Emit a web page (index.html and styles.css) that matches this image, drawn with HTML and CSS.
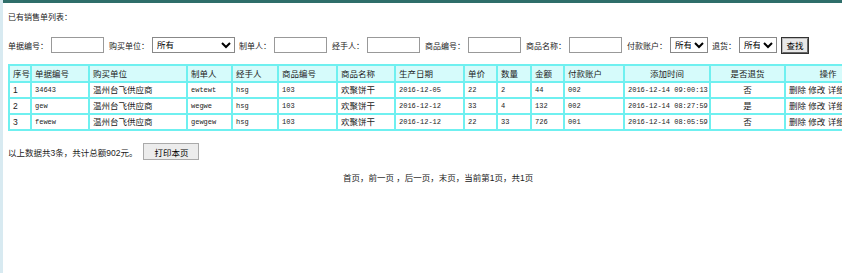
FILE: index.html
```html
<!DOCTYPE html>
<html lang="zh-CN">
<head>
  <meta charset="UTF-8">
  <title>已有销售单列表</title>
  <link rel="stylesheet" href="styles.css">
</head>
<body>
<div class="topbar"></div>
<div class="page">
  <div class="title">已有销售单列表：</div>

  <form class="filters">
    <label>单据编号：</label><input type="text" class="ipt">
    <label>购买单位：</label><select class="sel sel-wide"><option>所有</option></select>
    <label>制单人：</label><input type="text" class="ipt">
    <label>经手人：</label><input type="text" class="ipt">
    <label>商品编号：</label><input type="text" class="ipt">
    <label>商品名称：</label><input type="text" class="ipt">
    <label>付款账户：</label><select class="sel"><option>所有</option></select>
    <label>退货：</label><select class="sel"><option>所有</option></select>
    <button type="button" class="btn-find">查找</button>
  </form>

  <table class="list">
    <colgroup>
      <col style="width:22px"><col style="width:58px"><col style="width:98px"><col style="width:45px">
      <col style="width:46px"><col style="width:59px"><col style="width:58px"><col style="width:69px">
      <col style="width:33px"><col style="width:34px"><col style="width:33px"><col style="width:60px">
      <col style="width:86px"><col style="width:75px"><col style="width:86px">
    </colgroup>
    <tr class="head">
      <th>序号</th><th>单据编号</th><th>购买单位</th><th>制单人</th><th>经手人</th><th>商品编号</th>
      <th>商品名称</th><th>生产日期</th><th>单价</th><th>数量</th><th>金额</th><th>付款账户</th>
      <th class="c">添加时间</th><th class="c">是否退货</th><th class="c">操作</th>
    </tr>
    <tr>
      <td>1</td><td class="m">34643</td><td>温州台飞供应商</td><td class="m">ewtewt</td><td class="m">hsg</td><td class="m">103</td>
      <td>欢聚饼干</td><td class="m">2016-12-05</td><td class="m">22</td><td class="m">2</td><td class="m">44</td><td class="m">002</td>
      <td class="m c">2016-12-14 09:00:13</td><td class="c">否</td><td class="ops">删除 修改 详细</td>
    </tr>
    <tr>
      <td>2</td><td class="m">gew</td><td>温州台飞供应商</td><td class="m">wegwe</td><td class="m">hsg</td><td class="m">103</td>
      <td>欢聚饼干</td><td class="m">2016-12-12</td><td class="m">33</td><td class="m">4</td><td class="m">132</td><td class="m">002</td>
      <td class="m c">2016-12-14 08:27:59</td><td class="c">是</td><td class="ops">删除 修改 详细</td>
    </tr>
    <tr>
      <td>3</td><td class="m">fewew</td><td>温州台飞供应商</td><td class="m">gewgew</td><td class="m">hsg</td><td class="m">103</td>
      <td>欢聚饼干</td><td class="m">2016-12-12</td><td class="m">22</td><td class="m">33</td><td class="m">726</td><td class="m">001</td>
      <td class="m c">2016-12-14 08:05:59</td><td class="c">否</td><td class="ops">删除 修改 详细</td>
    </tr>
  </table>

  <div class="summary">
    <span>以上数据共3条，共计总额902元。</span>
    <button type="button" class="btn-print">打印本页</button>
  </div>

  <div class="pager">首页，前一页 ，后一页，末页，当前第1页，共1页</div>
</div>
</body>
</html>
```

FILE: styles.css
```css
:root {
  --teal: #2f6e6a;
  --cyan-border: #6ff0f0;
  --head-bg: #d6fbfb;
  --text: #222;
  --font: 'Liberation Sans', 'Noto Sans CJK SC', sans-serif;
}

html, body {
  margin: 0;
  padding: 0;
  overflow: hidden;
}

body {
  font-family: var(--font);
  font-size: 8.5px;
  color: var(--text);
  background: #fff;
  border-left: 3px solid #d8eaf1;
  height: 273px;
  box-sizing: border-box;
}

.topbar {
  height: 3px;
  background-color: var(--teal);
}

.page {
  padding: 0 0 0 5px;
}

.title {
  margin-top: 9px;
  height: 12px;
  line-height: 12px;
  font-size: 8px;
}

.filters {
  display: flex;
  align-items: center;
  margin-top: 12px;
  height: 18px;
  white-space: nowrap;
}

.filters label {
  flex-shrink: 0;
  font-size: 8px;
  margin-right: 3px;
}

.ipt {
  flex-shrink: 0;
  width: 53px;
  height: 16px;
  padding: 0;
  border: 1px solid #999;
  box-sizing: border-box;
  margin-right: 5px;
}

.sel {
  flex-shrink: 0;
  width: 38px;
  min-width: 38px;
  height: 16px;
  font-family: var(--font);
  font-size: 8.5px;
  padding: 0;
  border: 1px solid #888;
  background: #fff;
  margin-right: 4px;
  box-sizing: border-box;
}

.sel-wide {
  width: 83px;
  min-width: 83px;
}

.btn-find {
  flex-shrink: 0;
  height: 17px;
  width: 28px;
  padding: 0;
  font-family: var(--font);
  font-size: 8.5px;
  background: #e8e8e8;
  border: 2px outset #bbb;
  outline: 1px solid #333;
  outline-offset: -1px;
}

.list {
  margin-top: 10px;
  table-layout: fixed;
  width: 862px;
  border-collapse: collapse;
  border: 2px solid var(--cyan-border);
}

.list th,
.list td {
  border: 2px solid var(--cyan-border);
  padding: 0 3px;
  height: 14px;
  line-height: 14px;
  text-align: left;
  white-space: nowrap;
  overflow: hidden;
}

.list .head th {
  background-color: var(--head-bg);
  font-weight: normal;
  height: 15px;
}

.list .c {
  text-align: center;
}

.list .m {
  font-family: 'Liberation Mono', monospace;
  font-size: 7px;
}

.list .ops {
  padding-left: 3px;
}

.summary {
  display: flex;
  align-items: center;
  margin-top: 12px;
  height: 17px;
}

.btn-print {
  margin-left: 6px;
  width: 56px;
  height: 17px;
  padding: 0;
  font-family: var(--font);
  font-size: 8.5px;
  background: #ececec;
  border: 1px solid #aaa;
}

.pager {
  margin-top: 11px;
  padding-left: 335px;
  height: 14px;
  line-height: 14px;
}
```
